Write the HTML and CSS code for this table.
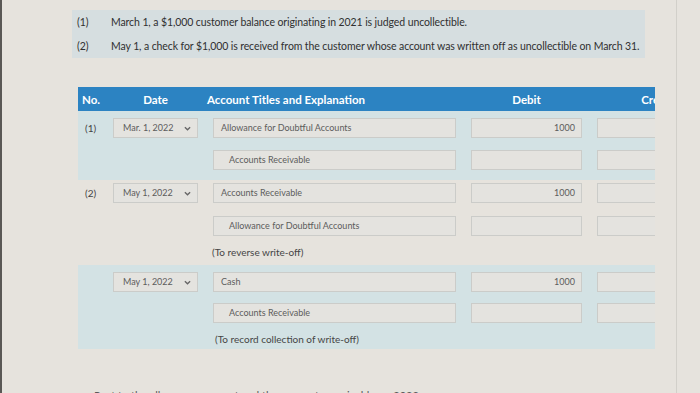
FILE: index.html
```html
<!DOCTYPE html>
<html>
<head>
<meta charset="utf-8">
<link rel="stylesheet" href="styles.css">
</head>
<body>
<div class="page">
  <div class="questions">
    <div class="q"><span class="qn">(1)</span><span>March 1, a $1,000 customer balance originating in 2021 is judged uncollectible.</span></div>
    <div class="q"><span class="qn">(2)</span><span>May 1, a check for $1,000 is received from the customer whose account was written off as uncollectible on March 31.</span></div>
  </div>

  <div class="table">
    <div class="head grid">
      <div class="h-no">No.</div>
      <div class="h-date">Date</div>
      <div class="h-acc">Account Titles and Explanation</div>
      <div class="h-num">Debit</div>
      <div class="h-num h-cr">Credit</div>
    </div>

    <div class="group g1 blue">
      <div class="grid row">
        <div class="no">(1)</div>
        <div class="select">Mar. 1, 2022<svg class="chev" viewBox="0 0 8 5" width="7" height="5"><path d="M1 1 L4 4 L7 1" fill="none" stroke="#666" stroke-width="1.5"/></svg></div>
        <div class="input">Allowance for Doubtful Accounts</div>
        <div class="input num">1000</div>
        <div class="input"></div>
      </div>
      <div class="grid row">
        <div></div><div></div>
        <div class="input indent">Accounts Receivable</div>
        <div class="input"></div>
        <div class="input"></div>
      </div>
    </div>

    <div class="group g2">
      <div class="grid row">
        <div class="no">(2)</div>
        <div class="select">May 1, 2022<svg class="chev" viewBox="0 0 8 5" width="7" height="5"><path d="M1 1 L4 4 L7 1" fill="none" stroke="#666" stroke-width="1.5"/></svg></div>
        <div class="input">Accounts Receivable</div>
        <div class="input num">1000</div>
        <div class="input"></div>
      </div>
      <div class="grid row r2">
        <div></div><div></div>
        <div class="input indent">Allowance for Doubtful Accounts</div>
        <div class="input"></div>
        <div class="input"></div>
      </div>
      <div class="grid expl">
        <div></div><div></div>
        <div class="expl-text">(To reverse write-off)</div>
      </div>
    </div>

    <div class="group g3 blue">
      <div class="grid row">
        <div class="no"></div>
        <div class="select">May 1, 2022<svg class="chev" viewBox="0 0 8 5" width="7" height="5"><path d="M1 1 L4 4 L7 1" fill="none" stroke="#666" stroke-width="1.5"/></svg></div>
        <div class="input">Cash</div>
        <div class="input num">1000</div>
        <div class="input"></div>
      </div>
      <div class="grid row r3">
        <div></div><div></div>
        <div class="input indent">Accounts Receivable</div>
        <div class="input"></div>
        <div class="input"></div>
      </div>
      <div class="grid expl">
        <div></div><div></div>
        <div class="expl-text e2">(To record collection of write-off)</div>
      </div>
    </div>
  </div>

  <p class="after">Post to the allowance account and the accounts receivable on 2022</p>
</div>
<div class="edge"></div>
</body>
</html>
```

FILE: styles.css
```css
html, body {
  margin: 0;
  padding: 0;
  height: 100%;
  overflow: hidden;
}
body {
  background: #e6e3dd;
  font-family: Lato, "Open Sans", "Liberation Sans", sans-serif;
  color: #3a3a3a;
  border-left: 2px solid #5a5855;
  box-sizing: border-box;
  position: relative;
}
.edge {
  position: absolute;
  top: 0;
  bottom: 0;
  left: 674px;
  width: 1px;
  background: #d2d0ca;
}
.page {
  padding: 10px 0 0 70px;
}
.questions {
  width: 573px;
  background: #d6dee0;
}
.q {
  display: flex;
  align-items: center;
  height: 24px;
  font-size: 10.5px;
  color: #303030;
  letter-spacing: -0.1px;
}
.qn {
  width: 39px;
  padding-left: 5px;
  box-sizing: border-box;
}
.table {
  margin: 29px 0 0 6px;
  width: 577px;
  overflow: hidden;
}
.grid {
  display: grid;
  grid-template-columns: 20px 85px 243px 111px 110px;
  column-gap: 15px;
  width: 634px;
}
.head {
  height: 24px;
  align-items: center;
  background: #2c83c2;
  color: #ffffff;
  font-weight: 700;
  font-size: 11.5px;
  width: 577px;
  overflow: hidden;
}
.h-no { padding-left: 4px; }
.h-date { text-align: center; }
.h-acc { margin-left: -6px; }
.h-num { text-align: center; }
.h-cr { padding-left: 10px; }
.group { width: 577px; }
.blue { background: #d3e2e4; }
.g1 { padding: 7px 0 10px; }
.g2 { padding: 3px 0 6px; }
.g3 { padding: 7px 0 3px; }
.row { height: 20px; }
.g1 .row + .row { margin-top: 12px; }
.r2 { margin-top: 13px; }
.r3 { margin-top: 11px; }
.no {
  font-size: 10px;
  color: #444;
  padding-left: 7px;
  line-height: 20px;
}
.select, .input {
  height: 20px;
  box-sizing: border-box;
  border: 1px solid #cbccc9;
  background: #e4e3df;
  font-size: 9px;
  color: #5c5c5c;
  line-height: 18px;
  white-space: nowrap;
  overflow: hidden;
}
.select {
  display: flex;
  align-items: center;
  justify-content: space-between;
  padding: 0 6px 0 9px;
}
.chev { flex: none; }
.input { padding-left: 7px; }
.input.indent { padding-left: 15px; }
.input.num {
  text-align: right;
  padding-right: 6px;
}
.expl {
  margin-top: 9px;
  height: 14px;
}
.expl-text {
  font-size: 10px;
  color: #454545;
  line-height: 14px;
  margin-left: -1px;
}
.expl-text.e2 { margin-left: 2px; }
.after {
  margin: 40px 0 0 22px;
  font-size: 11px;
  color: #5a5a5a;
  line-height: 14px;
}
```
